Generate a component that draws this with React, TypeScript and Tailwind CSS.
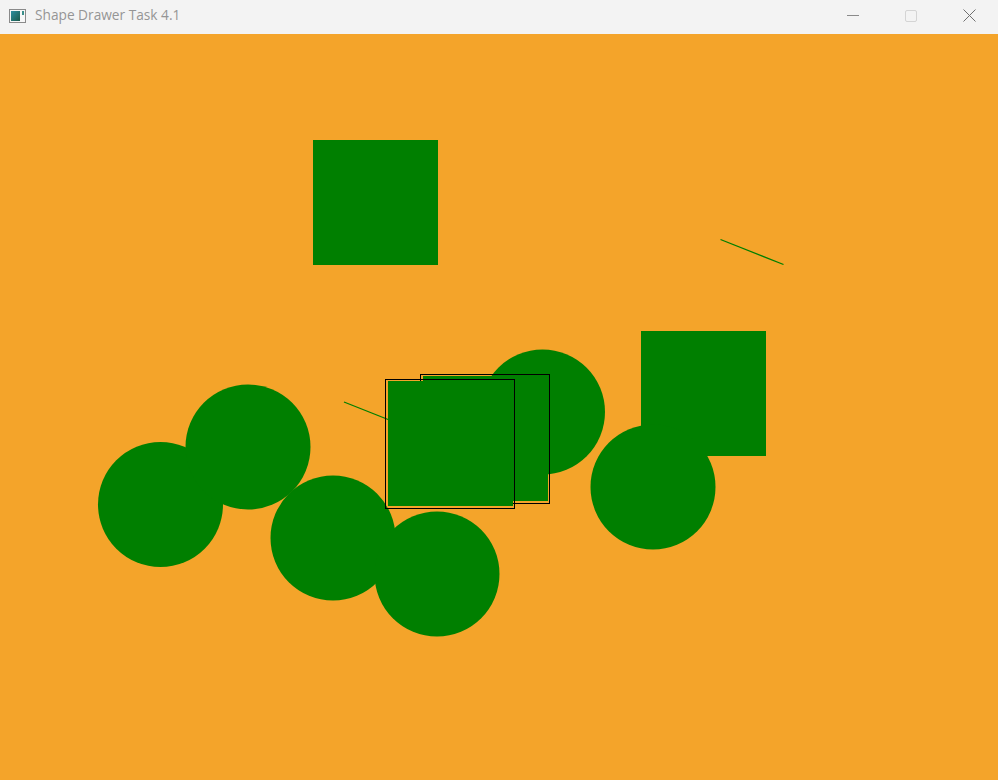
type Shape =
  | { kind: "rect"; x: number; y: number; selected?: boolean }
  | { kind: "circle"; x: number; y: number }
  | { kind: "line"; x1: number; y1: number; x2: number; y2: number };

const GREEN = "#007f00";
const SIZE = 125;

// canvas coordinates (window client area starts below the 34px title bar)
const shapes: Shape[] = [
  { kind: "rect", x: 313, y: 106 },
  { kind: "line", x1: 720.5, y1: 205.5, x2: 783.5, y2: 230.5 },
  { kind: "circle", x: 160.5, y: 470.5 },
  { kind: "circle", x: 248, y: 413 },
  { kind: "circle", x: 333, y: 504 },
  { kind: "circle", x: 542.5, y: 378 },
  { kind: "rect", x: 641, y: 297 },
  { kind: "circle", x: 653, y: 453 },
  { kind: "line", x1: 344, y1: 368, x2: 407, y2: 393 },
  { kind: "rect", x: 423, y: 342, selected: true },
  { kind: "rect", x: 388, y: 347, selected: true },
  { kind: "circle", x: 437, y: 540 },
];

function ShapeView({ s }: { s: Shape }) {
  if (s.kind === "circle") {
    return <circle cx={s.x} cy={s.y} r={SIZE / 2} fill={GREEN} />;
  }
  if (s.kind === "line") {
    return <line x1={s.x1} y1={s.y1} x2={s.x2} y2={s.y2} stroke={GREEN} strokeWidth={1.3} />;
  }
  return (
    <g>
      <rect x={s.x} y={s.y} width={SIZE} height={SIZE} fill={GREEN} shapeRendering="crispEdges" />
      {s.selected && (
        <rect
          x={s.x - 2.5}
          y={s.y - 1.5}
          width={129}
          height={129}
          fill="none"
          stroke="#000"
          strokeWidth={1}
          shapeRendering="crispEdges"
        />
      )}
    </g>
  );
}

function AppIcon() {
  return (
    <svg width="18" height="16" viewBox="0 0 18 16">
      <defs>
        <linearGradient id="ig" x1="0" y1="0" x2="1" y2="1">
          <stop offset="0" stopColor="#2f8fa0" />
          <stop offset="1" stopColor="#1c5a4a" />
        </linearGradient>
      </defs>
      <rect x="0.5" y="1.5" width="16" height="13" fill="#f7f7f7" stroke="#8a8a8a" />
      <rect x="2" y="3" width="9" height="10" fill="url(#ig)" />
      <rect x="13" y="3" width="2" height="4" fill="#3a8f8a" />
    </svg>
  );
}

export default function App() {
  return (
    <div className="w-[998px] h-[780px] flex flex-col overflow-hidden font-['Segoe_UI','Open_Sans','Noto_Sans',sans-serif]">
      <div className="h-[34px] shrink-0 bg-[#f3f3f3] flex items-center pb-[3px]">
        <div className="pl-[9px] pr-[8px] flex items-center">
          <AppIcon />
        </div>
        <span className="text-[13.7px] text-[#959595]">Shape Drawer Task 4.1</span>
        <div className="ml-auto flex items-center h-full">
          <div className="w-[58px] h-full flex items-center justify-center">
            <div className="w-[12px] h-px bg-[#8a8a8a]" />
          </div>
          <div className="w-[58px] h-full flex items-center justify-center">
            <div className="w-[12px] h-[12px] border border-[#d4d4d4] rounded-[2px]" />
          </div>
          <div className="w-[58px] h-full flex items-center justify-center">
            <svg width="13" height="13" viewBox="0 0 13 13">
              <path d="M0.5 0.5 L12.5 12.5 M12.5 0.5 L0.5 12.5" stroke="#6f6f6f" strokeWidth="1" />
            </svg>
          </div>
        </div>
      </div>
      <div className="flex-1 bg-[#f4a42a]">
        <svg width="998" height="746" className="block">
          {shapes.map((s, i) => (
            <ShapeView key={i} s={s} />
          ))}
        </svg>
      </div>
    </div>
  );
}
